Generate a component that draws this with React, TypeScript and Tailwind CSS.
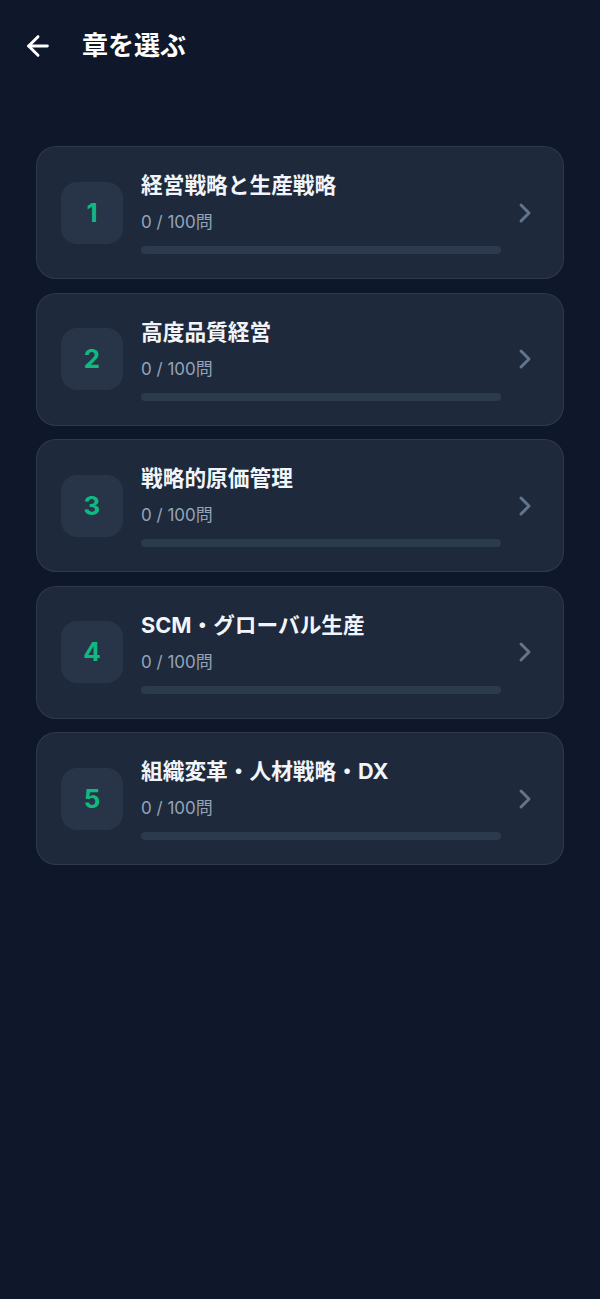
import { ArrowLeft, ChevronRight } from "lucide-react";

interface Chapter {
  no: number;
  title: string;
  done: number;
  total: number;
}

const chapters: Chapter[] = [
  { no: 1, title: "経営戦略と生産戦略", done: 0, total: 100 },
  { no: 2, title: "高度品質経営", done: 0, total: 100 },
  { no: 3, title: "戦略的原価管理", done: 0, total: 100 },
  { no: 4, title: "SCM・グローバル生産", done: 0, total: 100 },
  { no: 5, title: "組織変革・人材戦略・DX", done: 0, total: 100 },
];

function ChapterCard({ chapter }: { chapter: Chapter }) {
  const pct = chapter.total ? (chapter.done / chapter.total) * 100 : 0;
  return (
    <button className="flex items-center w-full text-left bg-[#1e293b] border border-[#334155]/70 rounded-[20px] pl-6 pr-[22px] py-6">
      <div className="w-[62px] h-[62px] shrink-0 rounded-[16px] bg-[#283548] flex items-center justify-center">
        <span className="text-[26px] font-bold text-[#10b981] leading-none">{chapter.no}</span>
      </div>
      <div className="flex-1 ml-[18px]">
        <h4 className="text-[21.7px] leading-[29px] font-bold text-[#f1f5f9]">{chapter.title}</h4>
        <p className="mt-[10px] text-[17px] leading-6 text-[#94a3b8]">
          {chapter.done} / {chapter.total}問
        </p>
        <div className="mt-3 h-2 rounded-full bg-[#2c3a4e] overflow-hidden">
          <div className="h-full bg-[#10b981] rounded-full" style={{ width: `${pct}%` }} />
        </div>
      </div>
      <ChevronRight size={32} strokeWidth={2.2} className="ml-2 shrink-0 text-[#64748b]" />
    </button>
  );
}

export default function App() {
  return (
    <div
      className="min-h-[1299px] bg-[#0f172a] text-white"
      style={{ fontFamily: 'Inter, "Noto Sans CJK JP", sans-serif' }}
    >
      <header className="flex items-center px-[22px] pt-[30px]">
        <button className="text-white">
          <ArrowLeft size={32} strokeWidth={2.2} />
        </button>
        <h1 className="ml-7 text-[26px] font-bold leading-8">章を選ぶ</h1>
      </header>

      <div className="mt-[84px] px-9 flex flex-col gap-[13.5px]">
        {chapters.map((c) => (
          <ChapterCard key={c.no} chapter={c} />
        ))}
      </div>
    </div>
  );
}
